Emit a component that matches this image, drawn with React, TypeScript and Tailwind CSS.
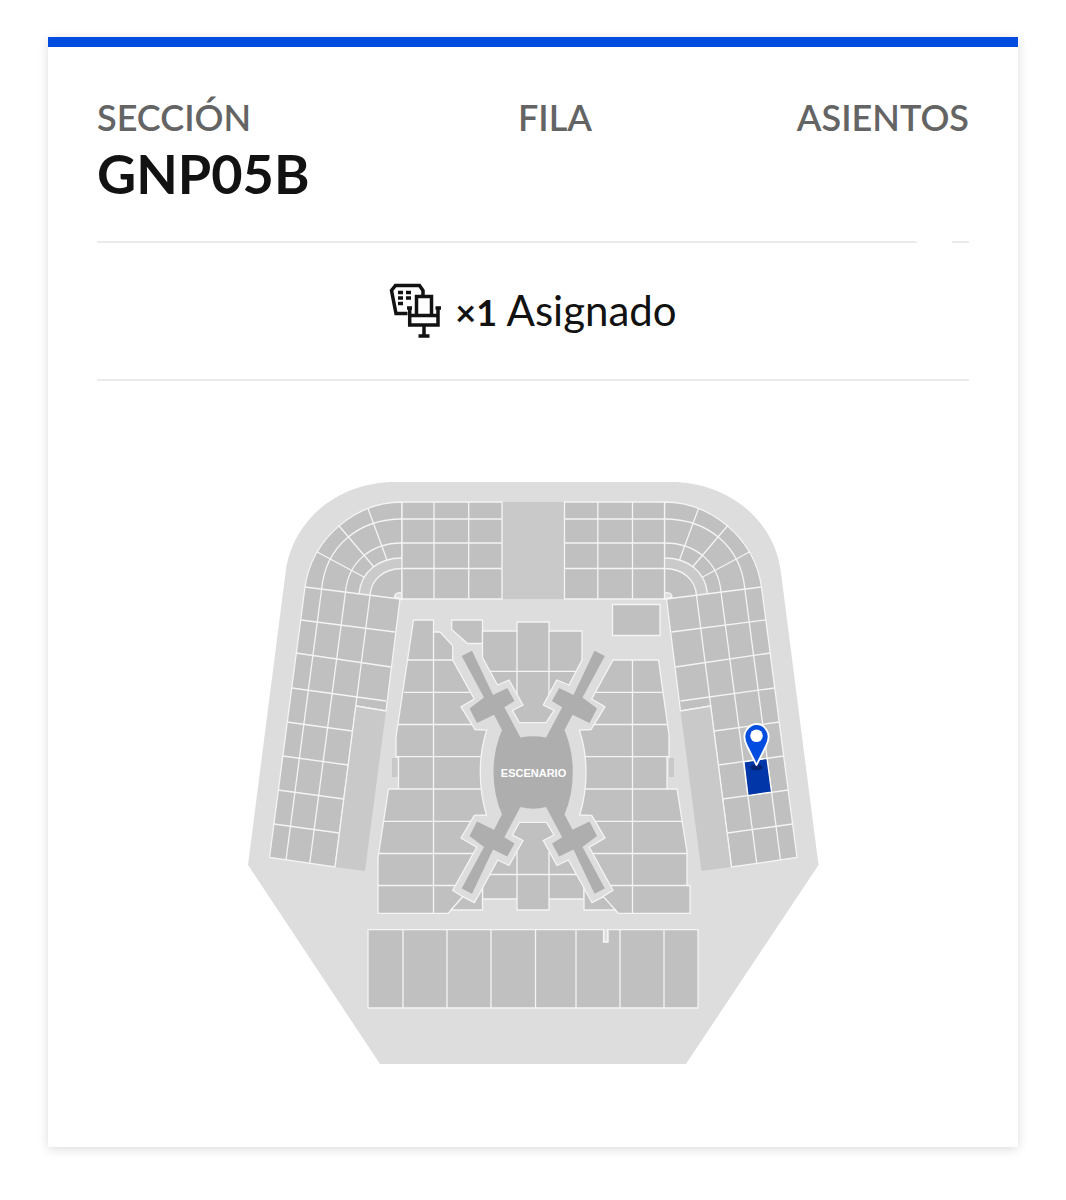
const wingRows: number[][] = [
  [305, 587, 400, 599],
  [301, 620, 395, 632],
  [296, 653, 391, 667],
  [292, 688, 386, 701],
  [287, 722, 352, 731],
  [283, 756, 348, 765],
  [278, 790, 344, 799],
  [274, 824, 339, 833],
];

function Wing() {
  return (
    <g>
      <path d="M402 502 C356 502 312 538 305 587 L269.500 857.500 L335 867 L356 706 L386 711 L400 599 H402 Z" fill="#c0c0c0" />
      <path d="M402 558 C378 558 361 572 359 594 L370 595.500 C371 580 383 568.500 402 568.500 Z" fill="#cacaca" stroke="none" />
      <path d="M356 706 L386 711 L365 871 L335 867 Z" fill="#c9c9c9" stroke="none" />
      <path d="M356 706 L386 711" />
      <path d="M402 519 C359 519 326 546 321.700 588.500 L286 860" fill="none" />
      <path d="M402 543 C370 543 348 563 345.500 592 L309.700 863.500" fill="none" />
      <path d="M402 558 C378 558 361 572 359 594" fill="none" />
      <path d="M402 568.500 C383 568.500 371 580 370 595.500 L335 867" fill="none" />
      <path d="M367.700 507.700 L387 560 M338.300 525 L374 567 M316.700 551.700 L364.300 577.300" />
      {wingRows.map(([x1, y1, x2, y2]) => (
        <path key={y1} d={`M${x1} ${y1} L${x2} ${y2}`} />
      ))}
      <path d="M394.500 597 C395 592 402 592 402 594 V599 Z" fill="#dddddd" />
      <path d="M402 502 H502 V599 H402 Z" fill="#c0c0c0" />
      <path d="M434 502 V599 M468.700 502 V599 M402 519 H502 M402 543 H502 M402 568.500 H502" />
    </g>
  );
}

const arm =
  "M472 650.700 L461.700 656 L484 697.500 L469.500 708.500 L477 723 L494 714.700 L502.500 731 L520.700 738 L504.300 707.300 L514.500 701 L507.300 688 L493 695 Z";

function VenueMap() {
  return (
    <svg viewBox="248 482 571 583" className="block w-full" role="img" aria-label="Mapa del recinto">
      <path d="M248 865 L285.500 573 C292 520 338 482 395 482 H671 C728 482 775 520 781 573 L818.500 865 L686 1064 H380 Z" fill="#dddddd" />
      <path d="M502 502 H564 V599 H502 Z" fill="#c9c9c9" />
      <g stroke="#f4f4f4" strokeWidth="1.3">
        <Wing />
        <g transform="translate(1066.500 0) scale(-1 1)">
          <Wing />
        </g>
        <g fill="#c0c0c0">
          <path d="M612.500 604.500 H660 V635.500 H612.500 Z" />
          <path d="M413.500 620 H433.500 V632 H440 L452.700 645.700 V660 L474.300 699 L461 706.700 L475 729.500 L486.700 730 Q480.300 750 480.300 772 Q480.300 795 486.500 815 L474.300 815.300 L461 838 L476.700 847.300 L452.700 890.300 L462.700 896.700 L448.300 913.300 H378 V858 L388.500 789 H398.500 V757 H396 V737 Z" />
          <path d="M613 660 H658.500 L669 735 V757 H667 V789 H677 L687 852 V885.500 H690 V913.300 H618.300 L602.700 896.700 L613 890.300 L589.300 847.300 L605 838 L591.700 815.300 L579.700 815 Q586 795 586 772 Q586 750 579.300 730 L591 729.500 L605 706.700 L591.700 699 Z" />
          <path d="M451.700 620 H482.500 V643.500 H467.500 L451.700 629.500 Z" />
          <path d="M482.500 631 H517 V622 H549 V631 H582 V660 L569 685 L556.700 680 L543.300 705 L554 710.500 L546 722.700 H519.500 L512.500 710.500 L523 705 L509 680 L497.500 685 L482.500 657.500 Z" />
          <path d="M519.500 822.300 H546.500 L554 835 L543.300 840.500 L557 865.500 L568.500 860 L584 888 V899 H549 V910 H517 V899 H482.500 V888 L497.700 860 L509 865.500 L523 840.500 L512.500 835 Z" />
          <path d="M462.700 896.700 L474.300 902.700 L482.500 888.500 V910 H451 Z" />
          <path d="M603.500 896.700 L592 902.700 L584 888.500 V910 H615.500 Z" />
          <path d="M368 929.700 H603.500 V942 H608 V929.700 H698 V1008 H368 Z" />
        </g>
        <path
          fill="none"
          d="M433.500 632 V913 M408 660 H452.700 M404 692.300 H470.500 M398 724.500 H472 M396 756.700 H481 M398 789 H481 M384 821.300 H471 M379 853.500 H473 M378 885.500 H455"
        />
        <path
          fill="none"
          d="M632.500 660 V913 M596 692.300 H663 M594 724.500 H667.500 M585 756.700 H668 M585 789 H668 M595 821.300 H682 M593 853.500 H687 M611 885.500 H688"
        />
        <path
          fill="none"
          d="M490 671.300 H576 M517 631 V694 M549 631 V694 M490 874.500 H576 M517 852 V899 M549 852 V899"
        />
        <path d="M403 930 V1008 M447 930 V1008 M491 930 V1008 M535.500 930 V1008 M576 930 V1008 M620 930 V1008 M664 930 V1008" />
        <path d="M604 929 V941.500 H607.500 V929" fill="#dddddd" />
      </g>
      <path d="M392 758 H397.500 V777 H392 Z M669 758 H674 V777 H669 Z" fill="#c9c9c9" />
      <g fill="#aeaeae">
        <path d={arm} />
        <path d={arm} transform="translate(1066.500 0) scale(-1 1)" />
        <path d={arm} transform="translate(0 1544.500) scale(1 -1)" />
        <path d={arm} transform="translate(1066.500 1544.500) scale(-1 -1)" />
        <path d="M502 730 L520.500 737.500 Q533 735 546 737.500 L564.500 730 Q572.800 750 572.800 772 Q572.800 795 564.500 814.500 L546 807 Q533 810.500 520.500 807 L502 814.500 Q493.500 795 493.500 772 Q493.500 750 502 730 Z" />
      </g>
      <text x="533.500" y="776.500" textAnchor="middle" fontSize="11" fontWeight="700" fill="#ffffff" className="font-['Liberation_Sans',sans-serif]">
        ESCENARIO
      </text>
      <path d="M744 762 L767 758.500 L771.500 792 L748 795.500 Z" fill="#0036a8" stroke="#ffffff" strokeWidth="1.200" />
      <ellipse cx="756.500" cy="767.500" rx="6" ry="3" fill="#00246f" />
      <path d="M756.500 765 L747 746 C743.500 739 743.500 734 746.500 730 C751.500 722 762 722 766.500 730 C769.500 734 769.500 739 766 746 Z" fill="#024ddf" stroke="#ffffff" strokeWidth="1.800" strokeLinejoin="round" />
      <circle cx="756.500" cy="735.700" r="6.300" fill="#ffffff" />
    </svg>
  );
}

function SeatIcon() {
  return (
    <svg viewBox="0 0 54 56" className="h-14 w-[54px] shrink-0" fill="none" stroke="#121212" strokeWidth="3.500" aria-hidden="true">
      <path d="M18.500 30.500 H7 L2.500 7.500 L6.500 2.500 H30.500 L34 7.500 V12" />
      <path d="M27.500 31 V13.500 H42.500 V31" />
      <path d="M18 25 H23 M20.700 25 V42 H49 V25 M46.500 25 H52 M20.700 32.500 H49" />
      <path d="M35 42 V53 M29.500 53 H40.500" />
      <path d="M9 9.500 H14 M17 9.500 H22 M9 15 H14 M17 15 H22 M9 20.500 H14" strokeWidth="3.300" />
    </svg>
  );
}

export default function App() {
  return (
    <main className="min-h-screen bg-white px-12 pt-[37px] pb-[53px] font-[Lato,sans-serif] text-[#121212]">
      <article className="border-t-10 border-[#024ddf] bg-white px-[49px] pb-[82px] shadow-[0_2px_10px_rgba(0,0,0,0.14)]">
        <dl className="flex h-[194px] justify-between pt-12">
          <div className="w-1/3">
            <dt className="text-[36px] leading-11 font-semibold text-[#646464]">SECCIÓN</dt>
            <dd className="text-[54px] leading-[70px] font-bold">GNP05B</dd>
          </div>
          <div className="w-1/3 text-center">
            <dt className="pl-11 text-[36px] leading-11 font-semibold text-[#646464]">FILA</dt>
          </div>
          <div className="w-1/3 text-right">
            <dt className="text-[36px] leading-11 font-semibold text-[#646464]">ASIENTOS</dt>
          </div>
        </dl>
        <div className="flex gap-[35px]">
          <div className="h-0.5 grow bg-[#ebebeb]" />
          <div className="h-0.5 w-[17px] bg-[#ebebeb]" />
        </div>
        <div className="flex h-[138px] items-center justify-center gap-3 border-b-2 border-[#ebebeb]">
          <SeatIcon />
          <p className="text-[42px] leading-12">
            <span className="text-[36px] font-bold">×1</span> Asignado
          </p>
        </div>
        <div className="mx-auto mt-[101px] w-[571px] max-w-full">
          <VenueMap />
        </div>
      </article>
    </main>
  );
}
